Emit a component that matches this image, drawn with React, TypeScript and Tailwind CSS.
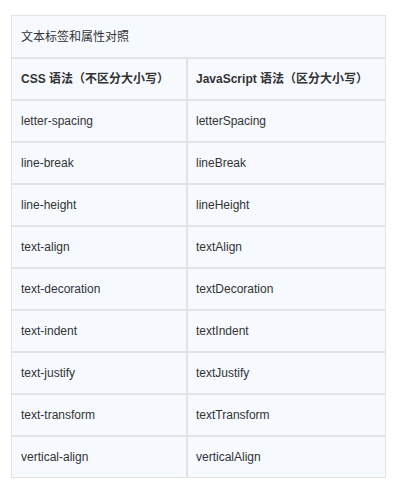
const ROWS: [string, string][] = [
  ["letter-spacing", "letterSpacing"],
  ["line-break", "lineBreak"],
  ["line-height", "lineHeight"],
  ["text-align", "textAlign"],
  ["text-decoration", "textDecoration"],
  ["text-indent", "textIndent"],
  ["text-justify", "textJustify"],
  ["text-transform", "textTransform"],
  ["vertical-align", "verticalAlign"],
];

export default function App() {
  return (
    <div
      className="min-h-[492px] w-[400px] bg-white pl-[11px] pt-[15px] text-[12px] text-[#333]"
      style={{ fontFamily: '"Liberation Sans", Arial, "Noto Sans CJK SC", sans-serif' }}
    >
      <div className="w-[375px] border border-[#e3e3e3] bg-[#f6faff]">
        <div className="flex h-[41px] items-center px-[9px]">文本标签和属性对照</div>
        <div className="flex border-t-2 border-[#e3e3e3] font-bold">
          <div className="flex h-[40px] w-[174px] items-center px-[9px]">CSS 语法（不区分大小写）</div>
          <div className="flex h-[40px] flex-1 items-center border-l-2 border-[#e3e3e3] px-2">
            JavaScript 语法（区分大小写）
          </div>
        </div>
        {ROWS.map(([css, js]) => (
          <div key={css} className="flex border-t-2 border-[#e3e3e3]">
            <div className="flex h-[40px] w-[174px] items-center px-[9px]">{css}</div>
            <div className="flex h-[40px] flex-1 items-center border-l-2 border-[#e3e3e3] px-2">
              {js}
            </div>
          </div>
        ))}
      </div>
    </div>
  );
}
